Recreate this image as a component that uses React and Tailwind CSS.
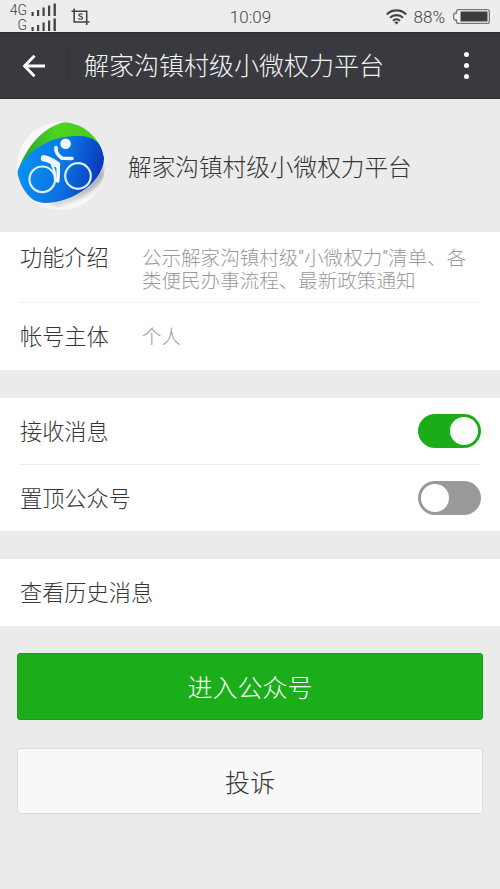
import { useState } from "react";

/* -------------------- DATA -------------------- */
const accountName = "解家沟镇村级小微权力平台";

const signals = ["4G", "G"];

/* -------------------- STATUS BAR -------------------- */
const SignalRow = ({ label }) => (
  <div className="flex items-end justify-end gap-[4px] h-[14px]">
    <span className="text-[14px] leading-[13px] font-light">{label}</span>
    <svg width="26" height="14" viewBox="0 0 26 14" fill="#444">
      <rect x="0.5" y="9" width="2.2" height="4" />
      <rect x="6" y="7" width="2.2" height="6" />
      <rect x="11.5" y="4.5" width="2.2" height="8.5" />
      <rect x="17" y="2.5" width="2.2" height="10.5" />
      <rect x="22.5" y="0.5" width="2.4" height="12.5" />
    </svg>
  </div>
);

const ScreenshotIcon = () => (
  <svg width="19" height="18" viewBox="0 0 19 18" fill="none" stroke="#444" strokeWidth="1.6">
    <path d="M0.5 3.2H15.7V17M3.2 0.5V14H18.5" />
    <path
      d="M11.6 6.5C11 5.7 7.8 5.4 7.8 7.1C7.8 8.8 11.5 8 11.5 9.9C11.5 11.7 8 11.5 7.3 10.4"
      strokeWidth="1.2"
    />
  </svg>
);

const WifiIcon = () => (
  <svg width="21" height="16" viewBox="0 0 21 16" fill="none" stroke="#444" strokeWidth="2.1">
    <path d="M0.8 5.4C6 0 15 0 20.2 5.4" />
    <path d="M4 8.7C7.5 5.2 13.5 5.2 17 8.7" />
    <path d="M7 11.8C9 9.9 12 9.9 14 11.8" />
    <path d="M8.3 13.3C9.6 12.2 11.4 12.2 12.7 13.3L10.5 15.6Z" fill="#444" stroke="none" />
  </svg>
);

const BatteryIcon = () => (
  <svg width="37" height="15" viewBox="0 0 37 15">
    <path
      d="M3.5 4V2.6Q3.5 0.7 5.4 0.7H34.4Q36.3 0.7 36.3 2.6V12.4Q36.3 14.3 34.4 14.3H5.4Q3.5 14.3 3.5 12.4V11Q0.7 11 0.7 9.3V5.7Q0.7 4 3.5 4Z"
      fill="#f5f5f5"
      stroke="#777"
      strokeWidth="1.3"
    />
    <rect x="7.5" y="2.5" width="27" height="10" fill="#3c3c3c" />
  </svg>
);

const StatusBar = () => (
  <div className="grid grid-cols-3 items-center h-8 pl-2 pr-[10px] bg-[#ededed] text-[#444]">
    <div className="flex items-center gap-[14px]">
      <div className="flex flex-col gap-px w-[49px] pt-px">
        {signals.map((label) => (
          <SignalRow key={label} label={label} />
        ))}
      </div>
      <ScreenshotIcon />
    </div>
    <span className="text-center text-[17px] leading-8 pl-[3px] pt-px">10:09</span>
    <div className="flex items-center justify-end">
      <WifiIcon />
      <span className="ml-[7px] mr-[8px] text-[17px] leading-8">88%</span>
      <BatteryIcon />
    </div>
  </div>
);

/* -------------------- HEADER -------------------- */
const Header = () => (
  <header className="flex items-center h-[67px] bg-[#393a3f] border-t border-b border-[#2c2d31] text-[#f4f4f4]">
    <button className="ml-[22px]">
      <svg width="24" height="24" viewBox="0 0 24 24" fill="none" stroke="#fff" strokeWidth="2.9">
        <path d="M12.5 1.8L2.6 12L12.5 22.2M2.6 12H23" />
      </svg>
    </button>
    <div className="w-px h-[34px] ml-[21px] mr-[16px] bg-[#303135]" />
    <h1 className="pt-[2px] text-[25px] leading-8 whitespace-nowrap">{accountName}</h1>
    <button className="ml-auto mr-[31px] flex flex-col gap-[6px]">
      <span className="size-[5px] rounded-full bg-white" />
      <span className="size-[5px] rounded-full bg-white" />
      <span className="size-[5px] rounded-full bg-white" />
    </button>
  </header>
);

/* -------------------- AVATAR -------------------- */
const Avatar = () => (
  <svg width="88" height="88" viewBox="0 0 88 88" className="shrink-0">
    <defs>
      <linearGradient id="blue" x1="0" y1="0.3" x2="1" y2="0.5">
        <stop offset="0" stopColor="#0b93f4" />
        <stop offset="0.55" stopColor="#0b74e2" />
        <stop offset="1" stopColor="#0a35b8" />
      </linearGradient>
      <linearGradient id="green" x1="0" y1="0.5" x2="1" y2="0.3">
        <stop offset="0" stopColor="#2aa535" />
        <stop offset="0.5" stopColor="#4fd61f" />
        <stop offset="1" stopColor="#45c41f" />
      </linearGradient>
      <clipPath id="round">
        <circle cx="44" cy="44" r="44" />
      </clipPath>
      <filter id="soft" x="-20%" y="-20%" width="140%" height="140%">
        <feGaussianBlur stdDeviation="2.5" />
      </filter>
    </defs>
    <g clipPath="url(#round)">
      <rect width="88" height="88" fill="#f8f8f8" />
      <path d="M28 81C52 82 76 66 88 40V54C80 68 62 77 40 83Z" fill="#a4a7af" filter="url(#soft)" />
      <path d="M2 46C8 30 22 6 48 0C66 0 84 10 87 28L60 30L10 42Z" fill="url(#green)" />
      <path
        d="M0 50C8 30 32 14 60 14C78 14 86 22 87 36C87 58 58 81 27 81C10 79 0 66 0 50Z"
        fill="url(#blue)"
      />
      <g fill="none" stroke="#d7efff">
        <circle cx="25.3" cy="57.3" r="12.8" strokeWidth="2.2" />
        <circle cx="61" cy="54" r="12.8" strokeWidth="2.2" />
      </g>
      <circle cx="48.6" cy="21.7" r="5.3" fill="#eef9ff" />
      <g fill="none" stroke="#eef9ff" strokeLinecap="round" strokeLinejoin="round">
        <path d="M39 25.5C38.5 30 41 33.5 45 36.2L55 36.5" strokeWidth="3.6" />
        <path d="M27 36.3C32 37 36 39.5 40 42.5" strokeWidth="6.4" />
        <path d="M41 43.5C41.5 48 41.2 54 40.7 59" strokeWidth="3.6" />
        <path d="M35 43.5C37.5 46.5 38.3 50 38 57" strokeWidth="2.2" />
      </g>
    </g>
  </svg>
);

/* -------------------- REUSABLE PIECES -------------------- */
const InfoRow = ({ label, children }) => (
  <div className="flex">
    <span className="w-[122px] shrink-0 text-[22.2px] leading-[26px]">{label}</span>
    <p className="text-[19.55px] leading-[22.5px] text-[#999] whitespace-nowrap pt-[3px]">{children}</p>
  </div>
);

const Toggle = ({ checked, onChange }) => (
  <button
    role="switch"
    aria-checked={checked}
    onClick={() => onChange(!checked)}
    className={`flex items-center w-[63px] h-[34px] px-[3px] rounded-full ${
      checked ? "justify-end bg-[#1aad19]" : "justify-start bg-[#999]"
    }`}
  >
    <span className="size-7 rounded-full bg-white" />
  </button>
);

const SwitchRow = ({ label, checked, onChange }) => (
  <div className="flex items-center justify-between h-[66px] -mr-px">
    <span className="pt-[2px] text-[22.2px] leading-[30px]">{label}</span>
    <Toggle checked={checked} onChange={onChange} />
  </div>
);

/* -------------------- PAGE -------------------- */
const App = () => {
  const [receive, setReceive] = useState(true);
  const [pinned, setPinned] = useState(false);

  return (
    <div className="w-[500px] h-[889px] overflow-hidden bg-[#ebebeb] text-[#353535] font-light font-[Roboto,'Noto_Sans_CJK_SC',sans-serif]">
      <StatusBar />
      <Header />

      {/* Profile */}
      <section className="flex items-center h-[133px] pl-[17px]">
        <Avatar />
        <h2 className="ml-[23px] pt-[4px] text-[23.65px] leading-8 whitespace-nowrap">{accountName}</h2>
      </section>

      {/* Account info */}
      <section className="h-[138px] px-5 bg-white">
        <div className="h-[71px] pt-[13px] border-b border-[#ededed]">
          <InfoRow label="功能介绍">
            公示解家沟镇村级“小微权力”清单、各
            <br />
            类便民办事流程、最新政策通知
          </InfoRow>
        </div>
        <div className="pt-[21px]">
          <InfoRow label="帐号主体">个人</InfoRow>
        </div>
      </section>

      {/* Switches */}
      <section className="mt-7 px-5 bg-white">
        <SwitchRow label="接收消息" checked={receive} onChange={setReceive} />
        <div className="h-px bg-[#ededed]" />
        <SwitchRow label="置顶公众号" checked={pinned} onChange={setPinned} />
      </section>

      {/* History */}
      <section className="flex items-center mt-7 h-[67px] px-5 pt-[2px] bg-white text-[22.2px]">
        查看历史消息
      </section>

      {/* Actions */}
      <div className="flex flex-col gap-7 mt-[27px] px-[17px] text-[25px]">
        <button className="h-[67px] pt-[5px] rounded-[3px] border border-[#179e16] bg-[#1cad1a] text-white">
          进入公众号
        </button>
        <button className="h-[66px] pt-[6px] rounded-[3px] border border-[#dcdcdc] bg-[#f8f8f8]">
          投诉
        </button>
      </div>
    </div>
  );
};

export default App;
